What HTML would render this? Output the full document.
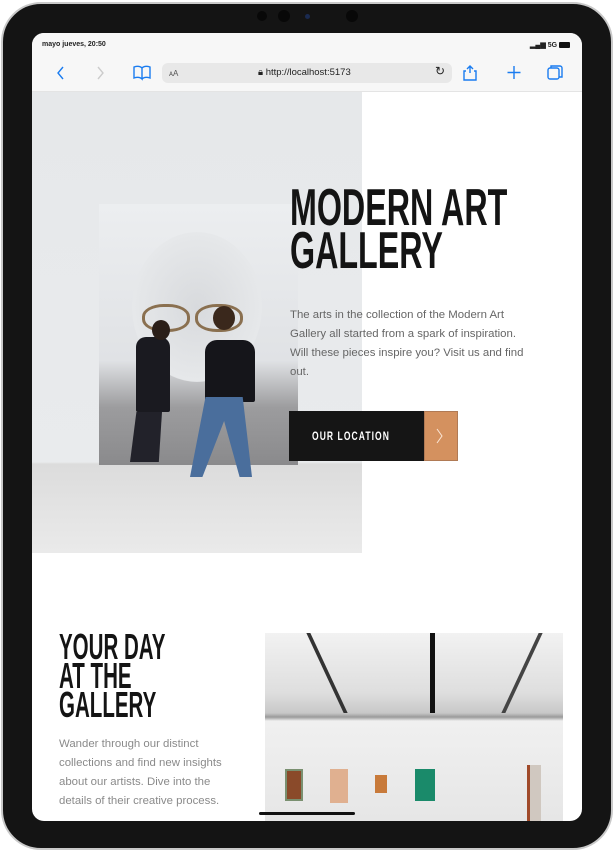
<!DOCTYPE html>
<html><head><meta charset="utf-8"><style>
*{margin:0;padding:0;box-sizing:border-box}
html,body{width:615px;height:852px;overflow:hidden;background:#fff;font-family:"Liberation Sans",sans-serif}
.dev{position:absolute;left:1px;top:2px;width:612px;height:848px;border-radius:40px;background:#141414;border:2px solid #c9c9c9}
.scr{position:absolute;left:32px;top:33px;width:550px;height:788px;border-radius:12px;overflow:hidden;background:#fff}
.cam{position:absolute;border-radius:50%;background:#080808}
.bar{position:absolute;left:0;top:0;width:550px;height:59px;background:#f7f7f7;border-bottom:1px solid #e4e4e4}
.cond{font-family:"Liberation Sans Narrow","Liberation Sans",sans-serif;font-weight:bold;transform-origin:0 0}
.p{color:#666;font-size:11.4px;line-height:19px}
</style></head><body>
<div class="dev"></div>
<div class="cam" style="left:257px;top:11px;width:10px;height:10px"></div>
<div class="cam" style="left:278px;top:10px;width:12px;height:12px"></div>
<div class="cam" style="left:305px;top:14px;width:5px;height:5px;background:#1a2a50"></div>
<div class="cam" style="left:346px;top:10px;width:12px;height:12px"></div>
<div class="scr">
 <div class="bar">
  <div style="position:absolute;left:10px;top:8px;font-size:7px;font-weight:bold;color:#222">mayo jueves, 20:50</div>
  <div style="position:absolute;right:12px;top:8px;font-size:7px;font-weight:bold;color:#222">▂▄▆ 5G <span style="display:inline-block;width:11px;height:6px;background:#111;border-radius:1px;vertical-align:middle"></span></div>
  <svg style="position:absolute;left:0;top:28px" width="550" height="24" fill="none" stroke="#1a7cf0" stroke-width="1.4">
   <path d="M31 6l-5 6 5 6"/>
   <path d="M66 6l5 6-5 6" stroke="#ccc"/>
   <path d="M102 6c3-1 6-1 8 1v11c-2-2-5-2-8-1zM110 7c2-2 5-2 8-1v11c-3-1-6-1-8 1"/>
   <path d="M438 12v-7M435 8l3-3 3 3M434 10h-2v9h12v-9h-2"/>
   <path d="M482 5v13M475.5 11.5h13"/>
   <rect x="516" y="7" width="11" height="11" rx="2"/><path d="M519 7V5h9a2 2 0 012 2v9h-3"/>
  </svg>
  <div style="position:absolute;left:130px;top:30px;width:290px;height:20px;border-radius:6px;background:#e8e8e8"></div>
  <div style="position:absolute;left:137px;top:36px;font-size:8px;color:#555">ᴀA</div>
  <div style="position:absolute;left:226px;top:34px;font-size:9.5px;color:#222">🔒︎ http://localhost:5173</div>
  <div style="position:absolute;left:403px;top:31px;font-size:12px;color:#222">↻</div>
 </div>
 <div style="position:absolute;left:0;top:59px;width:330px;height:461px;background:linear-gradient(#e6e8ea 0,#e9ebed 370px,#dcdcdc 372px,#eaeaea 461px);overflow:hidden">
  <div style="position:absolute;left:67px;top:112px;width:199px;height:261px;background:linear-gradient(#eceef0 0,#e0e2e5 60%,#9c9c9e 78%,#8a8a8c 100%)"></div>
  <div style="position:absolute;left:100px;top:140px;width:130px;height:150px;border-radius:50%;background:radial-gradient(#d8dadd,#e6e8ea 70%,transparent 72%)"></div>
  <div style="position:absolute;left:110px;top:212px;width:48px;height:28px;border:3px solid #8a7050;border-radius:45%"></div>
  <div style="position:absolute;left:163px;top:212px;width:48px;height:28px;border:3px solid #8a7050;border-radius:45%"></div>
  <div style="position:absolute;left:104px;top:245px;width:34px;height:75px;background:#1a1a20;border-radius:10px 10px 2px 2px"></div>
  <div style="position:absolute;left:120px;top:228px;width:18px;height:20px;background:#2a1e18;border-radius:50%"></div>
  <div style="position:absolute;left:98px;top:320px;width:32px;height:50px;background:#22222a;clip-path:polygon(20% 0,100% 0,90% 100%,0 100%)"></div>
  <div style="position:absolute;left:173px;top:248px;width:50px;height:62px;background:#15151a;border-radius:12px 12px 2px 2px"></div>
  <div style="position:absolute;left:181px;top:214px;width:22px;height:24px;background:#3a281c;border-radius:50%"></div>
  <div style="position:absolute;left:158px;top:305px;width:62px;height:80px;background:#4a6e9c;clip-path:polygon(25% 0,85% 0,100% 100%,80% 100%,55% 30%,20% 100%,0 100%)"></div>
 </div>
 <div class="cond" style="position:absolute;left:258px;top:154px;font-size:52px;line-height:43px;color:#141414;transform:scaleX(.62);white-space:nowrap">MODERN ART<br>GALLERY</div>
 <div class="p" style="position:absolute;left:258px;top:273px;width:245px">The arts in the collection of the Modern Art Gallery all started from a spark of inspiration. Will these pieces inspire you? Visit us and find out.</div>
 <div style="position:absolute;left:257px;top:378px;width:135px;height:50px;background:#151515"></div>
 <div class="cond" style="position:absolute;left:280px;top:396px;font-size:12px;letter-spacing:1.5px;color:#fff;transform:scaleX(.71);white-space:nowrap">OUR LOCATION</div>
 <div style="position:absolute;left:392px;top:378px;width:34px;height:50px;background:#d4915f;border:1px solid #b07a55"></div>
 <svg style="position:absolute;left:402px;top:394px" width="12" height="18" fill="none" stroke="#fbe6d6" stroke-width="1"><path d="M3 2l5 7-5 7"/></svg>
 <div class="cond" style="position:absolute;left:27px;top:599px;font-size:36px;line-height:29px;color:#141414;transform:scaleX(.57);white-space:nowrap">YOUR DAY<br>AT THE<br>GALLERY</div>
 <div class="p" style="position:absolute;left:27px;top:702px;width:185px;color:#8a8a8a">Wander through our distinct collections and find new insights about our artists. Dive into the details of their creative process.</div>
 <div style="position:absolute;left:233px;top:600px;width:298px;height:188px;background:linear-gradient(#f2f2f2 0,#dedede 60px,#c8c8c8 80px,#9a9a9a 84px,#f0f0f0 88px,#e6e6e6 188px);overflow:hidden">
  <div style="position:absolute;left:60px;top:0;width:4px;height:80px;background:#333;transform:skewX(25deg)"></div>
  <div style="position:absolute;left:165px;top:0;width:5px;height:80px;background:#111"></div>
  <div style="position:absolute;left:255px;top:0;width:4px;height:80px;background:#444;transform:skewX(-25deg)"></div>
  <div style="position:absolute;left:20px;top:136px;width:18px;height:32px;background:#8a4a2a;border:2px solid #7a9070"></div>
  <div style="position:absolute;left:65px;top:136px;width:18px;height:34px;background:#e0b090"></div>
  <div style="position:absolute;left:110px;top:142px;width:12px;height:18px;background:#c87a3a"></div>
  <div style="position:absolute;left:150px;top:136px;width:20px;height:32px;background:#1a8a6a"></div>
  <div style="position:absolute;left:262px;top:132px;width:14px;height:56px;background:#d0c8c0;border-left:3px solid #a04a2a"></div>
 </div>
 <div style="position:absolute;left:227px;top:779px;width:96px;height:3px;background:#111;border-radius:2px"></div>
</div>
</body></html>
